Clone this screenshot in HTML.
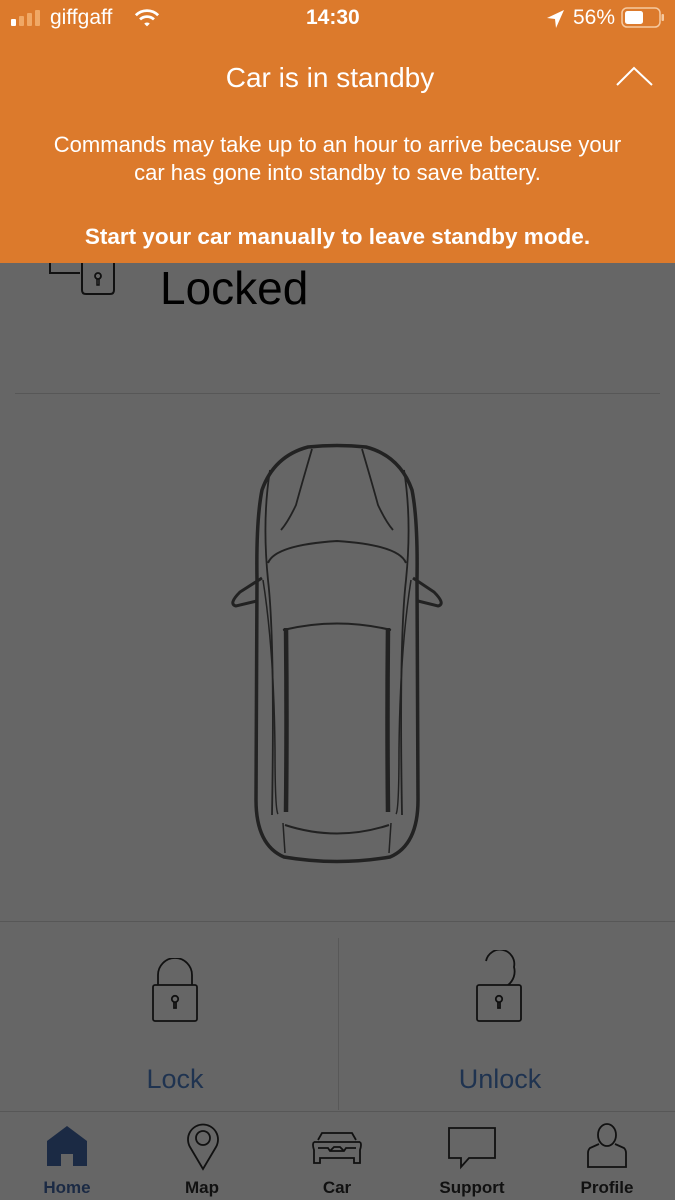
<!DOCTYPE html>
<html><head><meta charset="utf-8"><style>
*{margin:0;padding:0;box-sizing:border-box}
body{width:675px;height:1200px;background:#666;font-family:"Liberation Sans",sans-serif;position:relative;overflow:hidden}
.abs{position:absolute}
.banner{left:0;top:0;width:675px;height:263px;background:#dc7a2c;color:#fff}
.t{position:absolute;white-space:nowrap}
.line{position:absolute;height:1px;background:#555}
.lbl{position:absolute;font-size:27px;color:#1f3350;text-align:center}
.tab{position:absolute;top:1178px;font-size:17px;font-weight:bold;color:#111;text-align:center;width:100px}
</style></head><body>
<div class="abs banner">
  <svg class="abs" style="left:10px;top:8px" width="32" height="20"><rect x="1" y="11" width="5" height="7" rx="1" fill="#fff"/><rect x="9" y="8" width="5" height="10" rx="1" fill="#f0a865"/><rect x="17" y="5" width="5" height="13" rx="1" fill="#f0a865"/><rect x="25" y="2" width="5" height="16" rx="1" fill="#f0a865"/></svg>
  <div class="t" style="left:50px;top:6px;font-size:21px">giffgaff</div>
  <svg class="abs" style="left:134px;top:7px" width="26" height="22" viewBox="0 0 28 22"><path d="M2 8 A17 17 0 0 1 26 8" stroke="#fff" stroke-width="3" fill="none"/><path d="M6.5 12.5 A11 11 0 0 1 21.5 12.5" stroke="#fff" stroke-width="3" fill="none"/><path d="M11 17 L14 20 L17 17 A4.5 4.5 0 0 0 11 17Z" fill="#fff"/></svg>
  <div class="t" style="left:306px;top:6px;font-size:21px;font-weight:bold">14:30</div>
  <svg class="abs" style="left:546px;top:9px" width="20" height="20"><path d="M18 1 L1 9 L9 10 L10 19Z" fill="#fff"/></svg>
  <div class="t" style="left:573px;top:6px;font-size:21px">56%</div>
  <svg class="abs" style="left:621px;top:7px" width="44" height="22"><rect x="1" y="1" width="38" height="19" rx="5" fill="none" stroke="#f5c9a0" stroke-width="1.5"/><rect x="4" y="4" width="18" height="13" rx="2.5" fill="#fff"/><rect x="40.5" y="7" width="2.5" height="7" rx="1" fill="#f5c9a0"/></svg>
  <div class="t" style="left:0;width:660px;text-align:center;top:62px;font-size:28px">Car is in standby</div>
  <svg class="abs" style="left:615px;top:64px" width="40" height="24"><path d="M2 21 L19 4 L37 21" stroke="#fff" stroke-width="2" fill="none"/></svg>
  <div class="t" style="left:0;width:675px;text-align:center;top:131px;font-size:22px;line-height:28px">Commands may take up to an hour to arrive because your<br>car has gone into standby to save battery.</div>
  <div class="t" style="left:0;width:675px;text-align:center;top:224px;font-size:22.5px;font-weight:bold">Start your car manually to leave standby mode.</div>
</div>
<svg class="abs" style="left:45px;top:263px" width="75" height="35"><path d="M5 0 V10 H35" stroke="#111" stroke-width="2" fill="none"/><path d="M37 0 V27 Q37 31 41 31 H65 Q69 31 69 27 V0" stroke="#111" stroke-width="2" fill="none"/><circle cx="53" cy="13" r="3" stroke="#111" stroke-width="1.8" fill="none"/><path d="M52 16 V22 H54 V16" stroke="#111" stroke-width="1.5" fill="none"/></svg>
<div class="t" style="left:160px;top:261px;font-size:46px;color:#000">Locked</div>
<div class="line" style="left:15px;top:393px;width:645px;background:#575757"></div>
<svg class="abs" style="left:0;top:0" width="675" height="900" fill="none" stroke="#222">
 <path d="M308 447 Q337 444 366 447 Q400 456 412 490 Q418 520 417 580 Q418 700 418 800 Q418 845 390 857 Q337 866 284 857 Q256 845 256 800 Q256 700 257 580 Q256 520 262 490 Q274 456 308 447Z" stroke-width="3.5"/>
 <path d="M262 578 L240 592 Q228 604 236 606 L257 601" stroke-width="3"/>
 <path d="M413 578 L434 592 Q446 604 438 606 L418 601" stroke-width="3"/>
 <path d="M312 449 Q300 490 296 505 Q288 522 281 530" stroke-width="1.8"/>
 <path d="M362 449 Q374 490 378 505 Q386 522 393 530" stroke-width="1.8"/>
 <path d="M270 470 Q262 520 268 580 Q275 640 272 815" stroke-width="1.8"/>
 <path d="M404 470 Q412 520 406 580 Q399 640 402 815" stroke-width="1.8"/>
 <path d="M268 563 Q275 545 337 541 Q399 545 406 563" stroke-width="2"/>
 <path d="M283 630 Q337 617 391 630" stroke-width="2"/>
 <path d="M286 628 Q287 720 286 812" stroke-width="4.5"/>
 <path d="M388 628 Q387 720 388 812" stroke-width="4.5"/>
 <path d="M263 580 Q274 650 275 750 Q275 810 278 814" stroke-width="1.5"/>
 <path d="M411 580 Q400 650 399 750 Q399 810 396 814"  stroke-width="1.5"/>
 <path d="M285 825 Q337 842 389 825" stroke-width="2"/>
 <path d="M283 823 L285 853 M391 823 L389 853" stroke-width="1.5"/>
</svg>
<div class="line" style="left:0;top:921px;width:675px;background:#575757"></div>
<div class="line" style="left:338px;top:938px;width:1px;height:172px;background:#585858"></div>
<svg class="abs" style="left:150px;top:958px" width="50" height="66" fill="none" stroke="#111" stroke-width="1.8"><path d="M8 27 V17 A17 17 0 0 1 42 17 V27"/><rect x="3" y="27" width="44" height="36" rx="2"/><circle cx="25" cy="41" r="3.2"/><path d="M24 44 V50 H26 V44"/></svg>
<svg class="abs" style="left:474px;top:950px" width="56" height="74" fill="none" stroke="#111" stroke-width="1.8"><path d="M12 11 A14 14 0 0 1 40 17 A17 17 0 0 1 34 35"/><rect x="3" y="35" width="44" height="36" rx="2"/><circle cx="25" cy="49" r="3.2"/><path d="M24 52 V58 H26 V52"/></svg>
<div class="lbl" style="left:75px;width:200px;top:1064px">Lock</div>
<div class="lbl" style="left:400px;width:200px;top:1064px">Unlock</div>
<div class="line" style="left:0;top:1111px;width:675px;background:#575757"></div>
<svg class="abs" style="left:45px;top:1125px" width="44" height="42"><path d="M2 16 L22 1 L42 16 V41 H28 V29 H16 V41 H2Z" fill="#1b2a44"/></svg>
<svg class="abs" style="left:186px;top:1123px" width="34" height="48" fill="none" stroke="#111" stroke-width="1.8"><path d="M17 46 L4 24 A15 15 0 1 1 30 24Z"/><circle cx="17" cy="15" r="7"/></svg>
<svg class="abs" style="left:310px;top:1130px" width="54" height="36" fill="none" stroke="#111" stroke-width="1.8"><path d="M8 10 L12 3 H42 L46 10 M4 12 H50 M4 12 Q2 14 4 20 V33 H10 V28 H44 V33 H50 V20 Q52 14 50 12"/><path d="M8 18 H18 L20 21 H34 L36 18 H46"/><path d="M20 21 L24 17 H30 L34 21"/></svg>
<svg class="abs" style="left:447px;top:1126px" width="50" height="44" fill="none" stroke="#111" stroke-width="1.8"><path d="M2 2 H48 V32 H22 L14 41 V32 H2Z"/></svg>
<svg class="abs" style="left:586px;top:1123px" width="42" height="46" fill="none" stroke="#111" stroke-width="1.8"><ellipse cx="21" cy="12" rx="9" ry="11"/><path d="M13 21 L4 25 Q2 27 2 30 V44 H40 V30 Q40 27 38 25 L29 21"/></svg>
<div class="tab" style="left:17px;color:#1b2a44">Home</div>
<div class="tab" style="left:152px">Map</div>
<div class="tab" style="left:287px">Car</div>
<div class="tab" style="left:422px">Support</div>
<div class="tab" style="left:557px">Profile</div>
</body></html>
